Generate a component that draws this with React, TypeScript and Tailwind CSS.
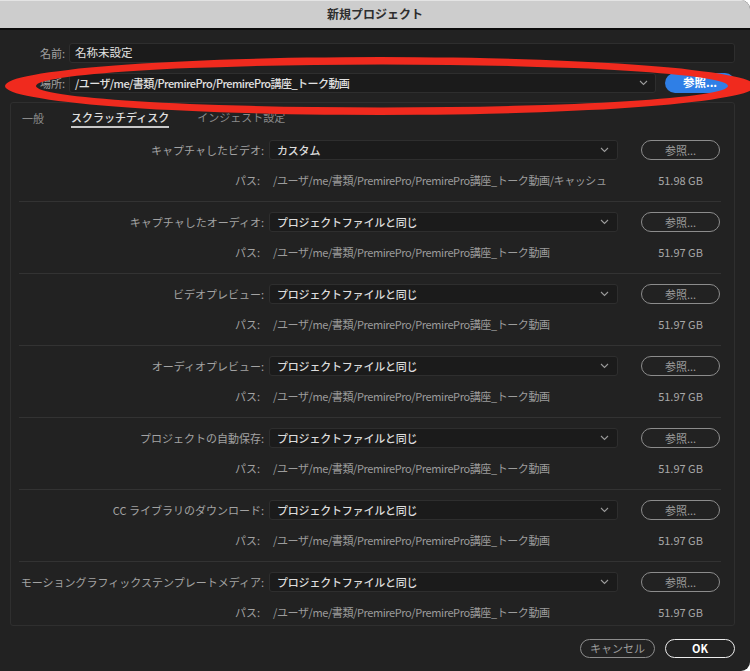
import React from "react";

const PATH = "/ユーザ/me/書類/PremirePro/PremirePro講座_トーク動画";

const sections = [
  { label: "キャプチャしたビデオ", value: "カスタム", path: PATH + "/キャッシュ", size: "51.98 GB" },
  { label: "キャプチャしたオーディオ", value: "プロジェクトファイルと同じ", path: PATH, size: "51.97 GB" },
  { label: "ビデオプレビュー", value: "プロジェクトファイルと同じ", path: PATH, size: "51.97 GB" },
  { label: "オーディオプレビュー", value: "プロジェクトファイルと同じ", path: PATH, size: "51.97 GB" },
  { label: "プロジェクトの自動保存", value: "プロジェクトファイルと同じ", path: PATH, size: "51.97 GB" },
  { label: "CC ライブラリのダウンロード", value: "プロジェクトファイルと同じ", path: PATH, size: "51.97 GB" },
  { label: "モーショングラフィックステンプレートメディア", value: "プロジェクトファイルと同じ", path: PATH, size: "51.97 GB" },
];

function Chevron() {
  return (
    <svg width="9" height="6" viewBox="0 0 9 6" className="shrink-0">
      <polyline points="1,1 4.5,4.5 8,1" fill="none" stroke="#9a9a9a" strokeWidth="1.1" />
    </svg>
  );
}

function Section({ s, last }: { s: (typeof sections)[number]; last: boolean }) {
  return (
    <div className={`flex flex-col pt-[10px] ${last ? "pb-[8px]" : "pb-[14px] border-b border-[#333333]"}`}>
      <div className="flex items-center h-[20px]">
        <div className="w-[250px] shrink-0 text-right text-[11px] text-[#a3a3a3] whitespace-nowrap pr-[5px]">
          {s.label}:
        </div>
        <div className="w-[349px] h-[20px] shrink-0 flex items-center justify-between rounded-[3px] border border-[#2e2e2e] bg-[#1b1b1b] pl-[7px] pr-[8px]">
          <span className="text-[11px] font-medium tracking-[-0.2px] text-[#dcdcdc]">{s.value}</span>
          <Chevron />
        </div>
        <div className="ml-[23px] w-[79px] h-[20px] shrink-0 flex items-center justify-center rounded-full border-[1.5px] border-[#8c8c8c] text-[11px] text-[#9c9c9c]">
          参照...
        </div>
      </div>
      <div className="flex items-center h-[14px] mt-[13px]">
        <div className="w-[250px] shrink-0 text-right text-[11px] text-[#a3a3a3] whitespace-nowrap pr-[9px]">パス:</div>
        <div className="w-[372px] shrink-0 text-[11px] tracking-[-0.4px] text-[#9c9c9c] whitespace-nowrap pl-[4px]">{s.path}</div>
        <div className="w-[79px] shrink-0 text-center text-[11px] text-[#a8a8a8]">{s.size}</div>
      </div>
    </div>
  );
}

export default function App() {
  return (
    <div className="w-[750px] h-[671px] bg-white font-['Noto_Sans_CJK_JP','Noto_Sans',sans-serif]">
      <div className="relative w-[750px] h-[671px] bg-[#222222] rounded-r-[9px] overflow-hidden flex flex-col">
        <div className="h-[30px] shrink-0 bg-[#cdcdcd] border-t border-[#e4e4e4] border-b-2 border-b-[#0c0c0c] flex items-center justify-center">
          <span className="text-[12px] font-bold text-[#2e2e2e] -mt-[1px]">新規プロジェクト</span>
        </div>

        <div className="flex flex-col px-[15px] pt-[13px]">
          <div className="flex items-center h-[20px]">
            <div className="w-[54px] shrink-0 text-right text-[11px] text-[#a3a3a3] pr-[4px]">名前:</div>
            <div className="flex-1 h-[20px] flex items-center rounded-[3px] border border-[#2e2e2e] bg-[#1b1b1b] pl-[5px] text-[11.5px] text-[#e2e2e2]">
              名称未設定
            </div>
          </div>
          <div className="flex items-center h-[20px] mt-[10px]">
            <div className="w-[54px] shrink-0 text-right text-[11px] text-[#a3a3a3] pr-[4px]">場所:</div>
            <div className="w-[587px] h-[20px] shrink-0 flex items-center justify-between rounded-[3px] border border-[#2e2e2e] bg-[#1b1b1b] pl-[5px] pr-[7px]">
              <span className="text-[11px] tracking-[-0.55px] font-medium text-[#e2e2e2]">{PATH}</span>
              <Chevron />
            </div>
            <div className="ml-[9px] flex-1 h-[20px] flex items-center justify-center rounded-full bg-[#2f7fe6] text-[11.5px] font-bold text-white">
              参照...
            </div>
          </div>
        </div>

        <div className="mt-[9px] ml-[10px] w-[725px] h-[524px] shrink-0 rounded-[3px] border border-[#2f2f2f] flex flex-col">
          <div className="flex items-start h-[25px] pt-[7px] pl-[11px] text-[11px]">
            <span className="text-[#8a8a8a]">一般</span>
            <div className="ml-[27px] flex flex-col">
              <span className="text-[#e0e0e0] font-medium leading-[14px]">スクラッチディスク</span>
              <div className="h-[2px] mt-[2px] bg-[#c8c8c8]" />
            </div>
            <span className="ml-[28px] text-[#8a8a8a] leading-[14px]">インジェスト設定</span>
          </div>
          <div className="flex flex-col ml-[8px] mr-[13px] mt-[2px]">
            {sections.map((s, i) => (
              <Section key={i} s={s} last={i === sections.length - 1} />
            ))}
          </div>
        </div>

        <div className="flex justify-end items-center mt-[13px] pr-[15px] gap-[10px]">
          <div className="w-[75px] h-[19px] flex items-center justify-center rounded-full border-[1.5px] border-[#8c8c8c] text-[11px] text-[#9c9c9c]">
            キャンセル
          </div>
          <div className="w-[70px] h-[19px] flex items-center justify-center rounded-full border-[1.5px] border-[#ececec] text-[11px] font-bold text-white">
            OK
          </div>
        </div>

        <svg className="absolute left-0 top-0 pointer-events-none" width="750" height="671" viewBox="0 0 750 671">
          <path
            fillRule="evenodd"
            fill="#f02a1e"
            d="M 5 86 A 375 29 0 1 0 755 86 A 375 29 0 1 0 5 86 Z M 36 86 A 346 21.5 0 1 0 728 86 A 346 21.5 0 1 0 36 86 Z"
          />
        </svg>
      </div>
    </div>
  );
}
